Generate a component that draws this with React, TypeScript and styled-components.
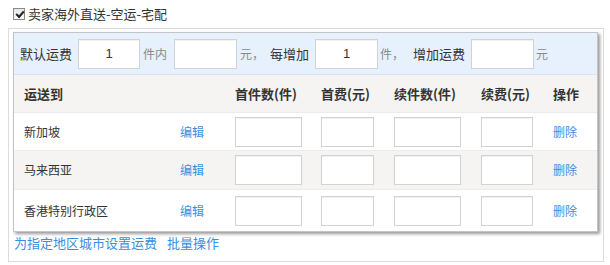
import React from 'react';
import styled, { createGlobalStyle } from 'styled-components';

const GlobalStyle = createGlobalStyle`
  body {
    margin: 0;
    background: #fff;
    font-family: "Noto Sans CJK SC", "Liberation Sans", sans-serif;
    color: #333;
  }
`;

const Page = styled.div({
  padding: '4px 0 0 8px',
  width: 596,
});

const TitleRow = styled.label({
  alignItems: 'center',
  display: 'flex',
  fontSize: 13,
  height: 20,
  lineHeight: '20px',
  marginBottom: 4,
});

const Check = styled.span({
  '&::after': {
    borderBottom: '2px solid #222',
    borderLeft: '2px solid #222',
    content: '""',
    height: 3,
    left: 2,
    position: 'absolute',
    top: 2,
    transform: 'rotate(-48deg)',
    width: 6,
  },
  background: 'linear-gradient(#e6e6e6, #fafafa)',
  border: '1px solid #8a8a8a',
  boxSizing: 'border-box',
  display: 'inline-block',
  height: 12,
  marginLeft: 5,
  marginRight: 3,
  position: 'relative',
  width: 12,
});

const OuterBox = styled.div({
  border: '1px solid #dcdcdc',
  boxSizing: 'border-box',
  height: 234,
  padding: '3px 5px 0 4px',
});

const Panel = styled.div({
  border: '1px solid #c4c4c4',
  boxShadow: '2px 2px 3px rgba(0,0,0,0.4)',
  boxSizing: 'border-box',
  height: 200,
  width: 585,
});

const DefaultRow = styled.div({
  alignItems: 'center',
  background: '#e7f1fd',
  borderBottom: '1px solid #d9e3ee',
  display: 'flex',
  height: 41,
  paddingLeft: 6,
});

const Label = styled.span<{ $left?: number; $muted?: boolean; $small?: boolean }>((p) => ({
  color: p.$muted ? '#8a8a8a' : '#333',
  fontSize: p.$small ? 12 : 13,
  lineHeight: '16px',
  marginLeft: p.$left ?? 0,
  whiteSpace: 'nowrap',
}));

const Field = styled.input<{ $w: number; $left?: number }>((p) => ({
  background: '#fff',
  border: '1px solid #d2d2d2',
  boxShadow: 'inset 0 1px 1px rgba(0,0,0,0.06)',
  boxSizing: 'border-box',
  color: '#333',
  fontFamily: '"Liberation Sans", sans-serif',
  fontSize: 13,
  height: 30,
  marginLeft: p.$left ?? 0,
  outline: 'none',
  padding: 0,
  textAlign: 'center',
  width: p.$w,
}));

const Row = styled.div<{ $head?: boolean; $shade?: boolean; $h: number }>((p) => ({
  alignItems: 'center',
  background: p.$shade || p.$head ? '#f5f4f2' : '#fff',
  borderBottom: '1px solid #ececec',
  display: 'grid',
  fontSize: p.$head ? 13 : 12,
  fontWeight: p.$head ? 700 : 400,
  gridTemplateColumns: '156px 55px 86px 73px 87px 72px 44px',
  height: p.$h,
  paddingLeft: 10,
  boxSizing: 'border-box',
  '&:last-child': {
    borderBottom: 'none',
  },
}));

const Cell = styled.span({
  lineHeight: '16px',
  whiteSpace: 'nowrap',
});

const Link = styled.a({
  color: '#3a8ee0',
  cursor: 'pointer',
  fontSize: 12,
  lineHeight: '16px',
  textDecoration: 'none',
});

const Footer = styled.div({
  display: 'flex',
  gap: 10,
  marginTop: 3,
  paddingLeft: 1,
  '& a': {
    fontSize: 13,
  },
});

const regions = ['新加坡', '马来西亚', '香港特别行政区'];
const heights = [38, 39, 41];

const App: React.FC = () => (
  <Page>
    <GlobalStyle />
    <TitleRow>
      <Check />
      卖家海外直送-空运-宅配
    </TitleRow>
    <OuterBox>
      <Panel>
        <DefaultRow>
          <Label>默认运费</Label>
          <Field $w={62} $left={6} defaultValue="1" />
          <Label $muted $small $left={3}>件内</Label>
          <Field $w={63} $left={7} />
          <Label $muted $small $left={3}>元，</Label>
          <Label $left={6}>每增加</Label>
          <Field $w={63} $left={6} defaultValue="1" />
          <Label $muted $small $left={2}>件，</Label>
          <Label $left={9}>增加运费</Label>
          <Field $w={63} $left={6} />
          <Label $muted $small $left={2}>元</Label>
        </DefaultRow>
        <Row $head $h={38}>
          <Cell>运送到</Cell>
          <Cell />
          <Cell>首件数(件)</Cell>
          <Cell>首费(元)</Cell>
          <Cell>续件数(件)</Cell>
          <Cell>续费(元)</Cell>
          <Cell>操作</Cell>
        </Row>
        {regions.map((name, i) => (
          <Row key={name} $shade={i === 1} $h={heights[i]}>
            <Cell>{name}</Cell>
            <Link>编辑</Link>
            <Field $w={67} />
            <Field $w={53} />
            <Field $w={67} />
            <Field $w={52} />
            <Link>删除</Link>
          </Row>
        ))}
      </Panel>
      <Footer>
        <Link>为指定地区城市设置运费</Link>
        <Link>批量操作</Link>
      </Footer>
    </OuterBox>
  </Page>
);

export default App;
